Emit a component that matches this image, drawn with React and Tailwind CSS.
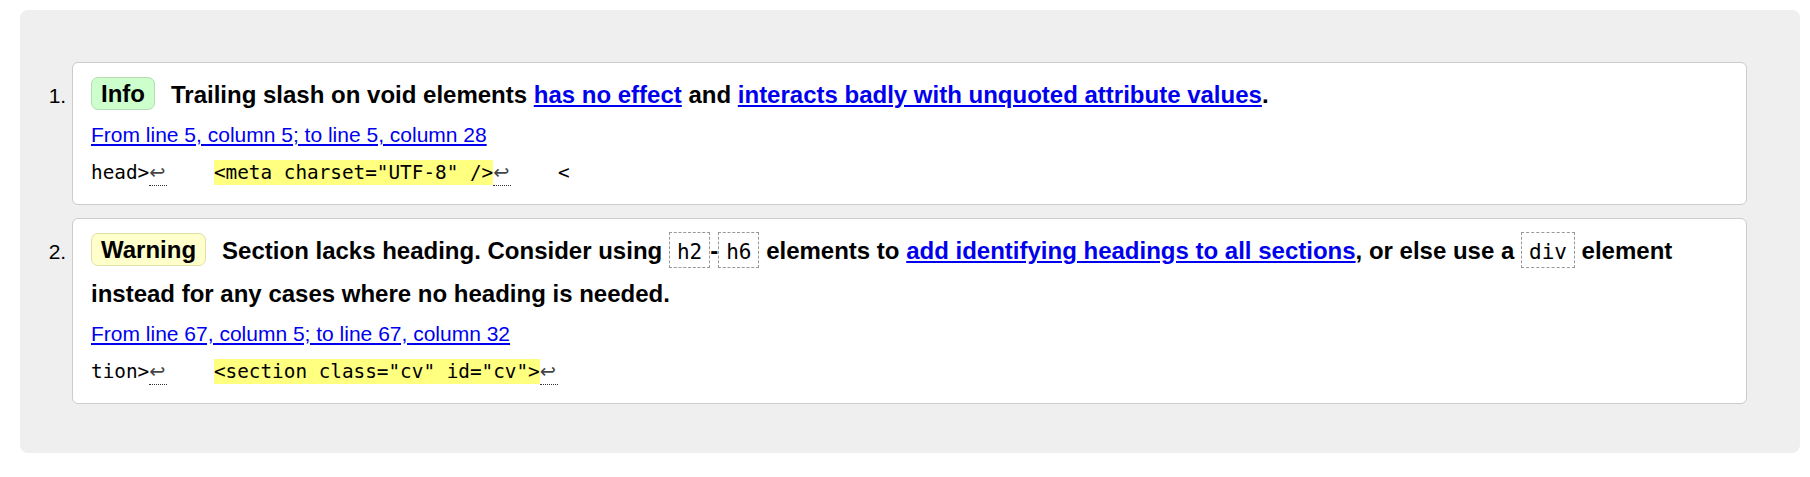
import React from 'react'

const sans = { fontFamily: '"Liberation Sans", Arial, sans-serif' }

function Badge({ kind, children }) {
  const tone =
    kind === 'info'
      ? 'bg-[#ccffcc] border-[#b4dcb4]'
      : 'bg-[#ffffcc] border-[#e0e0a8]'
  return (
    <span className={`inline-block align-[1px] mr-[16px] rounded-[7px] border px-[9px] pt-[2px] pb-[2px] text-[24px] leading-[27px] ${tone}`}>
      {children}
    </span>
  )
}

function Lf() {
  return (
    <span
      title="Line break"
      className="border-b border-dotted border-[#333] pr-[2px] pb-[1px] font-['DejaVu_Sans',sans-serif] text-[#444]"
    >
      ↩
    </span>
  )
}

function Code({ children }) {
  return (
    <code className="inline-block border border-dashed border-[#999] px-[7px] pt-[7px] pb-[3px] text-[21px] font-normal leading-[24px] font-['DejaVu_Sans_Mono',monospace]">
      {children}
    </code>
  )
}

function A({ children }) {
  return <a href="#" className="text-[#0000ee] underline">{children}</a>
}

function Message({ badge, kind, children, location, extract }) {
  return (
    <li className="rounded-[6px] border border-[#cccccc] bg-white px-[18px] pt-[10px] pb-[19px] text-[21px]">
      <p className="text-[24px] font-bold leading-[43px] text-black">
        <Badge kind={kind}>{badge}</Badge>
        {children}
      </p>
      <p className="mt-[7px] leading-[24px]">
        <A>{location}</A>
      </p>
      <p className="mt-[14px] whitespace-pre text-[19.33px] leading-[24px] font-['DejaVu_Sans_Mono',monospace]">
        {extract}
      </p>
    </li>
  )
}

export default function App() {
  return (
    <div className="bg-white pt-[10px] pl-[20px] pr-[10px] pb-[10px]" style={sans}>
      <div className="rounded-[8px] bg-[#efefef] pl-[52px] pr-[53px] pt-[52px] pb-[49px]">
        <ol className="list-decimal flex flex-col gap-[13px]">
          <Message
            kind="info"
            badge="Info"
            location="From line 5, column 5; to line 5, column 28"
            extract={
              <>
                head&gt;<Lf />{'    '}
                <span className="bg-[#ffff80] py-[1px]">&lt;meta charset="UTF-8" /&gt;</span>
                <Lf />{'    '}&lt;
              </>
            }
          >
            Trailing slash on void elements <A>has no effect</A> and{' '}
            <A>interacts badly with unquoted attribute values</A>.
          </Message>
          <Message
            kind="warning"
            badge="Warning"
            location="From line 67, column 5; to line 67, column 32"
            extract={
              <>
                tion&gt;<Lf />{'    '}
                <span className="bg-[#ffff80] py-[1px]">&lt;section class="cv" id="cv"&gt;</span>
                <Lf />
              </>
            }
          >
            Section lacks heading. Consider using <Code>h2</Code>-<Code>h6</Code> elements to{' '}
            <A>add identifying headings to all sections</A>, or else use a <Code>div</Code> element
            instead for any cases where no heading is needed.
          </Message>
        </ol>
      </div>
    </div>
  )
}
